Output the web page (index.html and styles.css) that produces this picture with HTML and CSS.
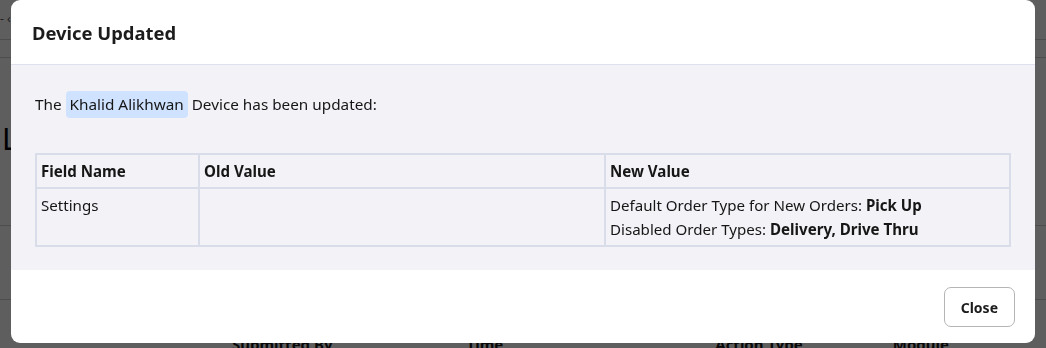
FILE: index.html
```html
<!DOCTYPE html>
<html lang="en">
<head>
    <meta charset="UTF-8">
    <meta name="viewport" content="width=device-width, initial-scale=1.0">
    <title>Device Updated</title>
    <link rel="stylesheet" href="styles.css">
</head>
<body>
    <!-- Page behind the modal -->
    <div class="page">
        <div class="topbar"><span class="crumb">- &lsaquo;</span></div>
        <div class="subbar"></div>
        <h1 class="page-title">Logs</h1>
        <div class="page-row row-a"></div>
        <div class="page-row row-b"></div>
        <div class="page-head">
            <span class="col-submitted">Submitted By</span>
            <span class="col-time">Time</span>
            <span class="col-action">Action Type</span>
            <span class="col-module">Module</span>
        </div>
    </div>

    <!-- Modal -->
    <div class="overlay">
        <div class="modal">
            <div class="modal-header">
                <h2>Device Updated</h2>
            </div>
            <div class="modal-body">
                <p class="intro">The <span class="chip">Khalid Alikhwan</span> Device has been updated:</p>
                <table class="changes">
                    <thead>
                        <tr>
                            <th class="col-field">Field Name</th>
                            <th class="col-old">Old Value</th>
                            <th>New Value</th>
                        </tr>
                    </thead>
                    <tbody>
                        <tr>
                            <td>Settings</td>
                            <td></td>
                            <td>
                                Default Order Type for New Orders: <strong>Pick Up</strong><br>
                                Disabled Order Types: <strong>Delivery, Drive Thru</strong>
                            </td>
                        </tr>
                    </tbody>
                </table>
            </div>
            <div class="modal-footer">
                <button class="btn">Close</button>
            </div>
        </div>
    </div>
</body>
</html>
```

FILE: styles.css
```css
* {
    box-sizing: border-box;
}
html, body {
    margin: 0;
    height: 100%;
    overflow: hidden;
}
body {
    font-family: "Noto Sans", "Open Sans", sans-serif;
    color: #161616;
    background: #fff;
}
.page {
    height: 100%;
}
.topbar {
    height: 40px;
    border-bottom: 1px solid #d0d0d0;
    padding: 10px 0 0 0;
    font-size: 12px;
    color: #555;
}
.subbar {
    height: 18px;
    border-bottom: 1px solid #d0d0d0;
}
.page-title {
    margin: 64px 0 0 2px;
    font-size: 30px;
    font-weight: 400;
    line-height: 34px;
    color: #000;
}
.page-row {
    border-bottom: 1px solid #d0d0d0;
}
.row-a {
    height: 70px;
}
.row-b {
    height: 74px;
}
.page-head {
    display: flex;
    margin-top: 34px;
    font-size: 15px;
    font-weight: 700;
}
.col-submitted { margin-left: 232px; }
.col-time { margin-left: 134px; }
.col-action { margin-left: 212px; }
.col-module { margin-left: 90px; }

.overlay {
    position: fixed;
    inset: 0;
    background: rgba(0, 0, 0, 0.63);
    display: flex;
    justify-content: center;
    align-items: flex-start;
}
.modal {
    width: 1024px;
    background: #fff;
    border-radius: 9px;
    overflow: hidden;
}
.modal-header {
    height: 65px;
    padding: 0 21px;
    display: flex;
    align-items: center;
    border-bottom: 1px solid #dfe2ec;
}
.modal-header h2 {
    margin: 0;
    font-size: 18.4px;
    font-weight: 700;
    color: #1c1c1c;
}
.modal-body {
    background: #f2f2f7;
    padding: 26px 24px 23px;
    font-size: 15.3px;
}
.intro {
    margin: 0 0 35px;
    line-height: 27px;
}
.chip {
    display: inline-block;
    background: #cfe2ff;
    border-radius: 4px;
    padding: 0 4px;
    line-height: 27px;
}
.changes {
    width: 100%;
    border-collapse: collapse;
    border: 2px solid #d9dde9;
    font-size: 15.1px;
}
.changes th, .changes td {
    border: 2px solid #d9dde9;
    padding: 4px 4px;
    text-align: left;
    vertical-align: top;
    line-height: 24px;
}
.changes th {
    font-weight: 700;
}
.col-field {
    width: 163px;
}
.col-old {
    width: 406px;
}
.modal-footer {
    height: 73px;
    padding: 17px 20px 0;
    display: flex;
    justify-content: flex-end;
    align-items: flex-start;
}
.btn {
    height: 40px;
    padding: 0 16px;
    background: #fff;
    border: 1px solid #b5b5b5;
    border-radius: 7px;
    font-family: inherit;
    font-size: 14px;
    font-weight: 700;
    color: #1c1c1c;
    cursor: pointer;
}
```
